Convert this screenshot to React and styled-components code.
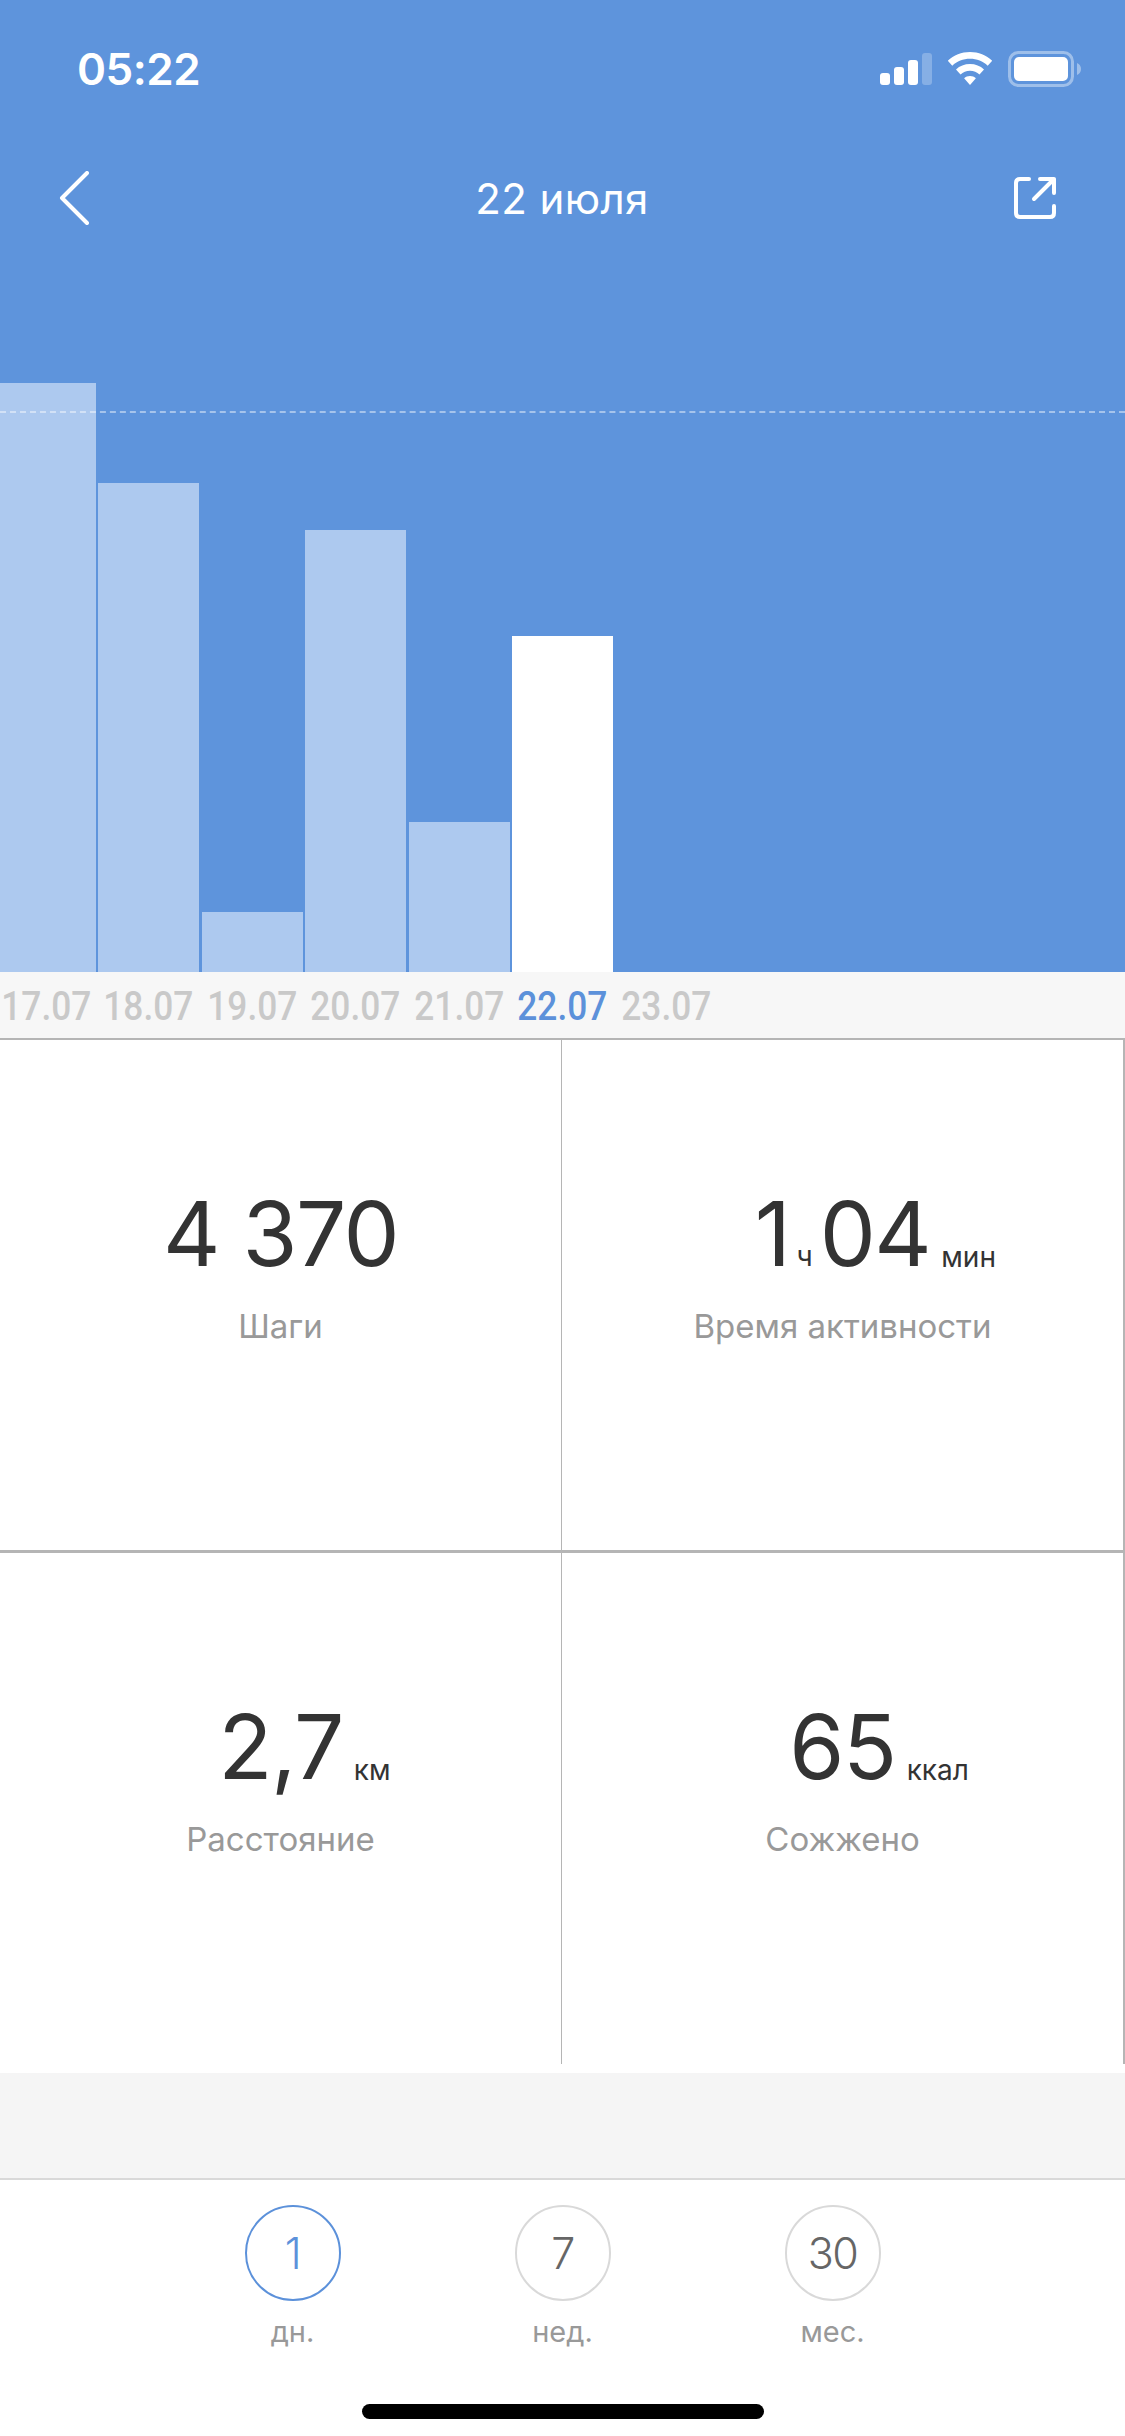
import React from 'react';
import styled, { createGlobalStyle } from 'styled-components';

const bars = [589, 489, 60, 442, 150, 336];
const dates = ['17.07', '18.07', '19.07', '20.07', '21.07', '22.07', '23.07'];
const ranges = [
    { num: '1', label: 'дн.', active: true },
    { num: '7', label: 'нед.' },
    { num: '30', label: 'мес.' },
];

export default function App() {
    return (
        <>
            <Global />
            <Page>
                <Header>
                    <StatusBar>
                        <Time>05:22</Time>
                        <StatusIcons>
                            <svg width="52" height="34" viewBox="0 0 52 34" fill="#fff">
                                <rect x="0" y="21" width="10" height="12" rx="3" />
                                <rect x="14" y="15" width="10" height="18" rx="3" />
                                <rect x="28" y="8" width="10" height="25" rx="3" />
                                <rect x="42" y="1" width="10" height="32" rx="3" opacity="0.25" />
                            </svg>
                            <svg width="46" height="34" viewBox="0 0 46 34" fill="#fff">
                                <path d="M23 0C14.500 0 6.700 3.300 0.800 8.700L5.300 13.700C10 9.400 16.200 6.800 23 6.800S36 9.400 40.700 13.700L45.200 8.700C39.300 3.300 31.500 0 23 0Z" />
                                <path d="M23 12C17.600 12 12.700 14 9 17.400L13.500 22.400C16 20.100 19.300 18.700 23 18.700S30 20.100 32.500 22.400L37 17.400C33.300 14 28.400 12 23 12Z" />
                                <path d="M23 24C20.700 24 18.700 24.800 17.100 26.200L23 33L28.900 26.200C27.300 24.800 25.300 24 23 24Z" />
                            </svg>
                            <svg width="74" height="36" viewBox="0 0 74 36">
                                <rect x="1.500" y="1.500" width="63" height="33" rx="9" fill="none" stroke="#fff" strokeOpacity="0.4" strokeWidth="3" />
                                <rect x="6" y="6" width="54" height="24" rx="5" fill="#fff" />
                                <path d="M69 12C71.500 13 73 15 73 18S71.500 23 69 24Z" fill="#fff" fillOpacity="0.4" />
                            </svg>
                        </StatusIcons>
                    </StatusBar>
                    <NavBar>
                        <svg width="30" height="54" viewBox="0 0 30 54" fill="none" stroke="#fff" strokeWidth="4" strokeLinecap="round" strokeLinejoin="round">
                            <path d="M28 2L3 27L28 52" />
                        </svg>
                        <Title>22 июля</Title>
                        <svg width="44" height="44" viewBox="0 0 44 44" fill="none" stroke="#fff" strokeWidth="4" strokeLinecap="round" strokeLinejoin="round">
                            <path d="M16 3H7C4.500 3 3 4.500 3 7V37C3 39.500 4.500 41 7 41H37C39.500 41 41 39.500 41 37V30" />
                            <path d="M21 23L41 3M27 3H41V17" />
                        </svg>
                    </NavBar>
                    <Chart>
                        <GoalLine />
                        {bars.map((h, i) => (
                            <Bar key={i} $first={i === 0} $today={i === bars.length - 1} style={{ height: h }} />
                        ))}
                    </Chart>
                </Header>
                <DateRow>
                    {dates.map(d => (
                        <DateCell key={d}>
                            <DateText $active={d === '22.07'}>{d}</DateText>
                        </DateCell>
                    ))}
                </DateRow>
                <StatsGrid>
                    <StatCell>
                        <Value><Number>4 370</Number></Value>
                        <Label>Шаги</Label>
                    </StatCell>
                    <StatCell>
                        <Value>
                            <Number>1</Number><Unit>ч</Unit><Number>04</Number>
                            <LastUnit>мин</LastUnit>
                        </Value>
                        <Label>Время активности</Label>
                    </StatCell>
                    <StatCell>
                        <Value>
                            <Number>2,7</Number>
                            <LastUnit>км</LastUnit>
                        </Value>
                        <Label>Расстояние</Label>
                    </StatCell>
                    <StatCell>
                        <Value>
                            <Number>65</Number>
                            <LastUnit>ккал</LastUnit>
                        </Value>
                        <Label>Сожжено</Label>
                    </StatCell>
                </StatsGrid>
                <Spacer />
                <BottomBar>
                    <Ranges>
                        {ranges.map(r => (
                            <Range key={r.num}>
                                <Circle $active={r.active}>{r.num}</Circle>
                                <RangeLabel>{r.label}</RangeLabel>
                            </Range>
                        ))}
                    </Ranges>
                    <HomeBar />
                </BottomBar>
            </Page>
        </>
    );
}

const Global = createGlobalStyle`
    html, body {
        margin: 0;
        padding: 0;
        background: #fff;
    }
    * {
        box-sizing: border-box;
    }
`;

const Page = styled.div`
    width: 1125px;
    height: 2436px;
    display: flex;
    flex-direction: column;
    overflow: hidden;
    background: #fff;
    font-family: Inter, "Noto Sans", sans-serif;
`;

const Header = styled.div`
    height: 972px;
    display: flex;
    flex-direction: column;
    background: #5e94dc;
    color: #fff;
`;

const StatusBar = styled.div`
    display: flex;
    justify-content: space-between;
    align-items: center;
    padding: 46px 43px 0 77px;
    height: 92px;
`;

const Time = styled.div`
    font-size: 44px;
    font-weight: 600;
    letter-spacing: -0.5px;
`;

const StatusIcons = styled.div`
    display: flex;
    align-items: center;
    gap: 15px;
`;

const NavBar = styled.div`
    display: flex;
    justify-content: space-between;
    align-items: center;
    padding: 0 68px 0 59px;
    margin-top: 78px;
    height: 56px;
`;

const Title = styled.div`
    font-size: 42px;
    font-weight: 400;
    letter-spacing: 0.4px;
    margin-left: 22px;
`;

const Chart = styled.div`
    position: relative;
    flex: 1;
    display: flex;
    align-items: flex-end;
    gap: 2.5px;
`;

const GoalLine = styled.div`
    position: absolute;
    left: 0;
    right: 0;
    top: 185px;
    border-top: 2px dashed rgba(255, 255, 255, 0.45);
`;

const Bar = styled.div`
    width: ${props => (props.$first ? '95.5px' : '101px')};
    background: ${props => (props.$today ? '#ffffff' : '#adc9ef')};
`;

const DateRow = styled.div`
    height: 68px;
    display: flex;
    align-items: center;
    background: #f7f7f7;
    padding-top: 2px;
    border-bottom: 2px solid #b5b5b5;
    gap: 2.5px;
`;

const DateCell = styled.div`
    width: 101px;
    display: flex;
    justify-content: center;
    &:first-child {
        width: 93px;
        margin-right: 2.5px;
    }
`;

const DateText = styled.span`
    display: inline-block;
    font-family: Roboto, sans-serif;
    font-size: 41px;
    font-weight: 500;
    line-height: 1;
    white-space: nowrap;
    transform: scaleX(0.86);
    color: ${props => (props.$active ? '#5c91da' : '#c9c9c9')};
`;

const StatsGrid = styled.div`
    display: grid;
    grid-template-columns: 562px 563px;
    grid-template-rows: 513px 520px;
`;

const StatCell = styled.div`
    display: flex;
    flex-direction: column;
    align-items: center;
    padding-top: 144px;
    border-right: 1px solid #b5b5b5;
    &:nth-child(-n + 2) {
        border-bottom: 3px solid #b5b5b5;
    }
    &:nth-child(n + 3) {
        margin-bottom: 9px;
    }
    &:nth-child(2n) {
        border-right-width: 2px;
    }
`;

const Value = styled.div`
    position: relative;
    display: flex;
    align-items: baseline;
    height: 100px;
    color: #333;
`;

const Number = styled.span`
    font-size: 89px;
    font-weight: 400;
    line-height: 100px;
    letter-spacing: -1.5px;
    white-space: nowrap;
`;

const Unit = styled.span`
    font-size: 28px;
    line-height: 1;
    margin: 0 7px 0 7px;
`;

const LastUnit = styled(Unit)`
    position: absolute;
    left: 100%;
    margin: 0 0 0 11px;
    bottom: 13px;
    white-space: nowrap;
`;

const Label = styled.div`
    margin-top: 22px;
    font-size: 33px;
    color: #999;
    white-space: nowrap;
`;

const Spacer = styled.div`
    height: 105px;
    background: #f5f5f5;
`;

const BottomBar = styled.div`
    flex: 1;
    display: flex;
    flex-direction: column;
    align-items: center;
    border-top: 2px solid #d9d9d9;
    padding-top: 25px;
`;

const Ranges = styled.div`
    display: flex;
    gap: 174px;
`;

const Range = styled.div`
    width: 96px;
    display: flex;
    flex-direction: column;
    align-items: center;
`;

const Circle = styled.div`
    width: 96px;
    height: 96px;
    border-radius: 50%;
    display: flex;
    align-items: center;
    justify-content: center;
    font-size: 43px;
    font-weight: 300;
    letter-spacing: -1.5px;
    border: 2px solid ${props => (props.$active ? '#5c91da' : '#d9d9d9')};
    color: ${props => (props.$active ? '#5c91da' : '#666')};
`;

const RangeLabel = styled.div`
    margin-top: 13px;
    font-size: 29px;
    color: #999;
    white-space: nowrap;
`;

const HomeBar = styled.div`
    width: 402px;
    height: 15px;
    margin-top: 55px;
    border-radius: 8px;
    background: #000;
`;
